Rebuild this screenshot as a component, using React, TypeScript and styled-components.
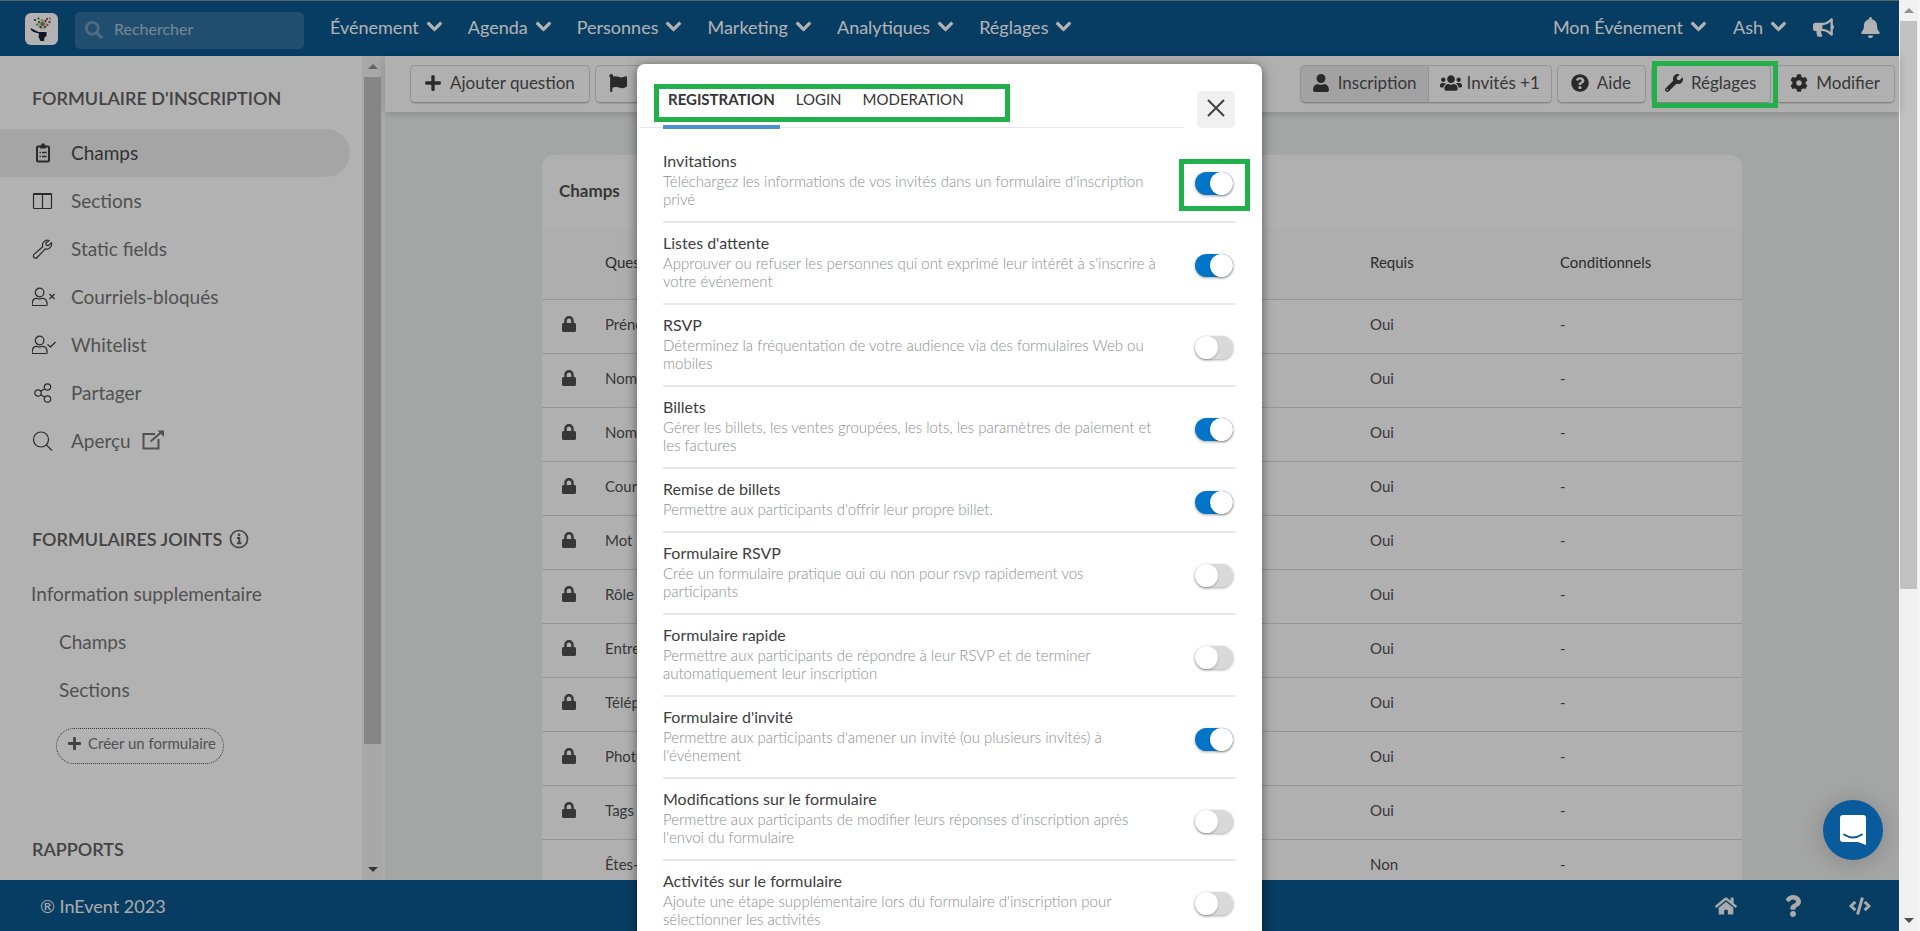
import React, { useState } from 'react';
import styled, { createGlobalStyle, css } from 'styled-components';
import {
  FaBell, FaBullhorn, FaChevronDown, FaCode, FaCog, FaFlag, FaHome, FaLock, FaPlus,
  FaQuestion, FaQuestionCircle, FaSearch, FaUser, FaUsers, FaWrench,
} from 'react-icons/fa';

const GlobalStyle = createGlobalStyle`
  * { box-sizing: border-box; }
  body { margin: 0; overflow: hidden; font-family: Lato, "Liberation Sans", sans-serif; color: #404040; }
  button, input { font: inherit; color: inherit; }
  button { cursor: pointer; }
  a { color: inherit; text-decoration: none; }
  h2, ul { margin: 0; padding: 0; }
  ul { list-style: none; }
`;

const Window = styled.div`
  display: grid;
  grid-template-columns: minmax(0, 1fr) 21px;
  height: 100vh;
  overflow: hidden;
`;

const Page = styled.div`
  position: relative;
  display: flex;
  flex-direction: column;
  min-height: 0;
`;

/* ---------- scrollbars ---------- */

const ScrollTrack = styled.div`
  display: flex;
  flex: 0 0 23px;
  flex-direction: column;
  align-items: center;
  border-right: 2px solid #f6f6f6;
  background: #f1f1f1;
`;

const ScrollThumb = styled.div<{ $share: number }>`
  flex: 0 0 ${p => p.$share}%;
  width: 17px;
  background: #c1c1c1;
`;

const Arrow = styled.span<{ $down?: boolean }>`
  display: flex;
  flex: none;
  align-items: center;
  justify-content: center;
  height: 21px;
  margin-top: ${p => (p.$down ? 'auto' : '0')};
  &::before {
    content: '';
    border: 5px solid transparent;
    ${p => (p.$down
    ? css`border-top-color: #505050; border-bottom: 0;`
    : css`border-bottom-color: #909090; border-top: 0;`)}
  }
`;

/* ---------- top bar ---------- */

const TopBar = styled.header`
  display: flex;
  align-items: center;
  flex: none;
  height: 56px;
  padding: 0 18px 0 25px;
  border-top: 1px solid #7c8b96;
  background: #0b578f;
  color: #fff;
`;

const Logo = styled.a`
  display: flex;
  width: 33px;
  height: 32px;
  border-radius: 6px;
  background: #fff;
`;

const Search = styled.label`
  display: flex;
  align-items: center;
  gap: 11px;
  width: 229px;
  height: 37px;
  margin: 3px 26px 0 17px;
  padding: 0 10px 4px;
  border-radius: 5px;
  background: #306f9f;
  color: #6d9abd;
  svg { flex: none; margin-top: 4px; font-size: 18px; }
`;

const SearchInput = styled.input`
  min-width: 0;
  flex: 1;
  padding: 0;
  border: 0;
  outline: 0;
  background: transparent;
  font-size: 16px;
  &::placeholder { color: #a9c3d8; opacity: 1; }
`;

const TopNav = styled.nav`
  display: flex;
  flex: 1;
  gap: 25px;
`;

const MenuButton = styled.button`
  display: flex;
  align-items: center;
  gap: 7px;
  padding: 0 0 4px;
  border: 0;
  background: none;
  font-size: 18px;
  line-height: 24px;
  white-space: nowrap;
  svg { font-size: 17px; stroke: currentColor; stroke-width: 24px; }
`;

const TopRight = styled.div`
  display: flex;
  align-items: center;
  gap: 26px;
`;

const IconButton = styled.button`
  display: flex;
  padding: 0 0 2px;
  border: 0;
  background: none;
  font-size: 21px;
`;

/* ---------- sidebar ---------- */

const Body = styled.div`
  display: flex;
  flex: 1;
  min-height: 0;
`;

const Sidebar = styled.aside`
  flex: 0 0 362px;
  overflow: hidden;
  padding: 31px 12px 0 0;
  background: #fff;
`;

const SideHeading = styled.h2`
  display: flex;
  align-items: center;
  gap: 7px;
  padding-left: 32px;
  font-size: 18px;
  font-weight: 600;
  line-height: 22px;
  color: #606060;
`;

const SideList = styled.ul<{ $space: number }>`
  margin: 20px 0 ${p => p.$space}px;
`;

const SideLink = styled.a<{ $active?: boolean; $sub?: boolean }>`
  display: flex;
  align-items: center;
  height: 48px;
  padding: 0 0 2px ${p => (p.$sub ? 59 : 31)}px;
  border-radius: 0 24px 24px 0;
  background: ${p => (p.$active ? '#ededed' : 'transparent')};
  color: ${p => (p.$active ? '#4a4a4a' : '#757575')};
  font-size: 19px;
`;

const SideIcon = styled.span`
  display: flex;
  width: 40px;
  padding: 1px 0 0 1px;
  color: #3d3d3d;
`;

const OpenIcon = styled.span`
  display: flex;
  margin-left: 11px;
`;

const CreateButton = styled.button`
  display: flex;
  align-items: center;
  gap: 6px;
  height: 36px;
  margin: 14px 0 74px 56px;
  padding: 0 7px 6px 10px;
  border: 1px dotted #555;
  border-radius: 18px;
  background: transparent;
  color: #757575;
  font-size: 15px;
  svg { color: #5f5f5f; }
`;

/* ---------- main area ---------- */

const Main = styled.main`
  display: flex;
  flex: 1;
  flex-direction: column;
  min-width: 0;
  background: #ebeeed;
`;

const Toolbar = styled.div`
  position: relative;
  display: flex;
  align-items: center;
  flex: none;
  gap: 5px;
  height: 56px;
  padding: 0 4px 0 25px;
  background: #fdfdfd;
  box-shadow: 0 1px 8px rgba(0, 0, 0, 0.2);
`;

const Spacer = styled.div`
  flex: 1;
`;

const ToolButton = styled.button<{ $pressed?: boolean; $join?: 'left' | 'right' }>`
  display: flex;
  align-items: center;
  gap: ${p => (p.$join === 'right' ? 5 : 8)}px;
  height: 38px;
  padding: ${p => (p.$join ? '0 11px 3px' : '0 14px 3px 13px')};
  border: 1px solid #d6d6d6;
  border-bottom-color: #bdbdbd;
  border-radius: ${p => (p.$join === 'left' ? '5px 0 0 5px' : p.$join === 'right' ? '0 5px 5px 0' : '5px')};
  ${p => p.$join === 'right' && 'border-left: 0;'}
  background: ${p => (p.$pressed ? '#e9e9e9' : '#fdfdfd')};
  box-shadow: 0 1px 1px rgba(0, 0, 0, 0.12);
  font-size: 17px;
  white-space: nowrap;
  color: #505050;
  svg { font-size: ${p => (p.$join === 'right' ? 22 : 18)}px; color: #3c3c3c; }
`;

const ButtonGroup = styled.div`
  display: flex;
`;

const Content = styled.div`
  flex: 1;
  min-height: 0;
  overflow: hidden;
  padding-top: 43px;
`;

const Card = styled.section`
  max-width: 1200px;
  min-height: 100%;
  margin: 0 auto;
  border-radius: 12px 12px 0 0;
  overflow: hidden;
  background: #fdfdfd;
`;

const CardTitle = styled.h2`
  padding: 0 17px 2px;
  font-size: 17px;
  line-height: 71px;
  color: #505050;
`;

const Table = styled.table`
  width: 100%;
  border-collapse: collapse;
  table-layout: fixed;
  font-size: 15px;
  color: #505050;
  th { height: 71px; padding: 0 0 2px; background: #f9f9f9; font-weight: 400; text-align: left; color: #404040; }
  td { height: 54px; padding: 0 0 4px; }
  tr { border-bottom: 1px solid #d6d6d6; }
`;

const HeadCell = styled.th<{ $width?: number }>`
  width: ${p => (p.$width ? `${p.$width}px` : 'auto')};
`;

const LockCell = styled.td`
  svg { display: block; margin-left: 19px; font-size: 16px; color: #505050; }
`;

const FootBar = styled.footer`
  display: flex;
  align-items: center;
  flex: none;
  gap: 45px;
  height: 51px;
  padding: 0 28px 0 40px;
  background: #0b578f;
  color: #f4f4f4;
  font-size: 18px;
`;

const FootLink = styled.a`
  display: flex;
  font-size: 22px;
`;

/* ---------- overlay and dialog ---------- */

const Backdrop = styled.div`
  position: absolute;
  inset: 0;
  display: flex;
  justify-content: center;
  overflow: hidden;
  padding-top: 64px;
  background: rgba(0, 0, 0, 0.3);
`;

const Dialog = styled.section`
  flex: 0 1 625px;
  height: max-content;
  min-height: 100%;
  border-radius: 8px;
  background: #fff;
  box-shadow: 0 2px 12px rgba(0, 0, 0, 0.5);
`;

const DialogHead = styled.div`
  display: flex;
  align-items: flex-start;
  padding: 20px 27px 0 2px;
`;

const TabLine = styled.div`
  position: relative;
  flex: 1;
  margin-right: 13px;
  padding-left: 24px;
  border-bottom: 1px solid #e6e6e6;
`;

const Tabs = styled.div`
  display: flex;
  gap: 11px;
  height: 43px;
`;

const Tab = styled.button<{ $active?: boolean }>`
  flex: none;
  height: 45px;
  padding: 2px 5px 13px;
  border: 0;
  border-bottom: 4px solid ${p => (p.$active ? '#4a90d9' : 'transparent')};
  background: none;
  font-size: 15px;
  line-height: 20px;
  font-weight: ${p => (p.$active ? 700 : 400)};
  color: #353535;
`;

const CloseButton = styled.button`
  display: flex;
  align-items: center;
  justify-content: center;
  width: 38px;
  height: 37px;
  margin-top: 7px;
  padding: 0 0 3px;
  border: 0;
  border-radius: 5px;
  background: #f0f0f0;
  color: #404040;
`;

const Options = styled.ul`
  padding: 13px 26px 0;
`;

const Option = styled.li`
  display: flex;
  justify-content: space-between;
  padding: 9px 0 13px;
  border-bottom: 2px solid #e8e8e8;
`;

const OptionText = styled.label`
  flex: 0 1 497px;
`;

const OptionTitle = styled.span`
  display: block;
  font-size: 16px;
  line-height: 22px;
  color: #404040;
`;

const OptionNote = styled.span`
  display: block;
  font-size: 15px;
  font-weight: 300;
  line-height: 18px;
  color: #8a8f8f;
`;

const SwitchCell = styled.div`
  position: relative;
  display: flex;
  align-items: center;
  padding: 8px 3px 0 0;
`;

const Switch = styled.input`
  appearance: none;
  display: flex;
  width: 38px;
  height: 23px;
  margin: 0;
  border-radius: 12px;
  background: #d9d9d9;
  box-shadow: 0 1px 3px rgba(0, 0, 0, 0.35);
  cursor: pointer;
  &::before {
    content: '';
    width: 23px;
    height: 23px;
    border-radius: 50%;
    background: #fff;
    box-shadow: 0 1px 2px rgba(0, 0, 0, 0.25);
  }
  &:checked { justify-content: flex-end; background: #0275c9; }
`;

const highlight = css`
  position: absolute;
  border: 5px solid #22b04b;
  pointer-events: none;
`;

const TabsMark = styled.div`
  ${highlight}
  top: 0;
  left: 15px;
  width: 356px;
  height: 38px;
`;

const SwitchMark = styled.div`
  ${highlight}
  inset: 9px -14px -3px -16px;
`;

const ToolMark = styled.div`
  ${highlight}
  z-index: 2;
  top: 61px;
  right: 121px;
  width: 126px;
  height: 47px;
`;

const ChatButton = styled.button`
  position: absolute;
  right: 16px;
  bottom: 71px;
  display: flex;
  align-items: center;
  justify-content: center;
  width: 60px;
  height: 60px;
  padding: 0;
  border: 0;
  border-radius: 50%;
  background: #0a5b9b;
  box-shadow: 0 2px 24px rgba(0, 0, 0, 0.2);
`;

/* ---------- line icons ---------- */

const Line = ({ size = 20, width = 24, w = 1.2, children }: { size?: number; width?: number; w?: number; children: React.ReactNode }) => (
  <svg
    width={(size * width) / 20} height={size} viewBox={`0 0 ${width} 20`}
    fill="none" stroke="currentColor" strokeWidth={w} strokeLinejoin="round" aria-hidden="true"
  >
    {children}
  </svg>
);

const ClipboardIcon = () => (
  <Line w={2}>
    <rect x="5" y="3.5" width="12" height="15" rx="1" />
    <path d="M8 2.5h6v3H8z" fill="currentColor" stroke="none" />
    <circle cx="11" cy="2.2" r="1.9" fill="currentColor" stroke="none" />
    <path d="M7.5 9.5h1.4M10 9.5h4.6M7.5 13.5h1.4M10 13.5h4.6" strokeWidth="1.3" />
  </Line>
);
const ColumnsIcon = () => (
  <Line>
    <rect x="1.5" y="2.5" width="18" height="15" rx="1" />
    <path d="M1.5 3h18" strokeWidth="2" />
    <path d="M10.5 3v14.5" />
  </Line>
);
const WrenchIcon = () => (
  <Line>
    <path d="M17.2 1.5a5 5 0 0 0-6.5 6.2L2 15.4a2.2 2.2 0 0 0 3.2 3.1l8-8.6a5 5 0 0 0 6.2-6.2l-3 3-2.1-.6-.5-2z" />
  </Line>
);
const Person = () => (
  <>
    <circle cx="7.6" cy="5.5" r="4.3" />
    <path d="M4.6 11.3C1.6 11.3.1 14 .1 17.5q0 1 1 1h13q1 0 1-1c0-3.5-1.5-6.2-4.5-6.2-2 1-4 1-6 0z" />
  </>
);
const PersonRemoveIcon = () => (
  <Line><Person /><path d="M17.5 7l5 5m0-5l-5 5" /></Line>
);
const PersonCheckIcon = () => (
  <Line><Person /><path d="M15.5 9.5l3 2.500 5-5" /></Line>
);
const ShareIcon = () => (
  <Line>
    <circle cx="6" cy="10" r="3.2" />
    <circle cx="15.5" cy="4" r="3.2" />
    <circle cx="15.5" cy="16" r="3.2" />
    <path d="M8.7 8.3l4.1-2.6M8.7 11.7l4.1 2.6" />
  </Line>
);
const LensIcon = () => (
  <Line><circle cx="9" cy="8.5" r="7.5" /><path d="M14.3 13.8l5.7 5.7" /></Line>
);
const OpenExternalIcon = () => (
  <Line size={20} w={2}>
    <path d="M13 4H1.5v14.500h15V9" strokeLinejoin="miter" />
    <path d="M8.5 11.5L19 2.5" />
    <path d="M15.5 0.5H22V7z" fill="currentColor" stroke="none" />
  </Line>
);
const InfoIcon = () => (
  <Line size={20} width={20} w={1.7}>
    <circle cx="10" cy="10" r="8.5" />
    <circle cx="10" cy="5.8" r="1.4" fill="currentColor" stroke="none" />
    <path d="M8 9h2.3v5M8 14.2h4.5" strokeWidth="2" />
  </Line>
);
const LogoIcon = () => (
  <svg width="33" height="32" viewBox="0 0 33 32" aria-hidden="true">
    <path d="M5.5 15l3 1.500 5 2.500h8v4l-2 1.500-.5 3.500h-3.500l-2-4 .5-3.500-5.500-1.500-2.500-2z" fill="#123" />
    <circle cx="17.5" cy="11.5" r="5" fill="#d9d3b4" />
    <circle cx="17.5" cy="11" r="2" fill="#568e61" />
    <g fill="#333">
      <circle cx="10" cy="7" r="1.1" /><circle cx="13.5" cy="5.5" r=".9" /><circle cx="14" cy="9" r=".9" />
      <circle cx="20.5" cy="8" r=".9" /><circle cx="15.5" cy="14" r=".9" /><circle cx="20" cy="14" r=".9" />
    </g>
    <g fill="#c0455c">
      <circle cx="22" cy="6" r="1.2" /><circle cx="24.5" cy="9" r="1.2" /><circle cx="22.5" cy="12" r="1" />
    </g>
    <circle cx="17" cy="7" r="1" fill="#d8a33a" /><circle cx="12" cy="11.5" r="1" fill="#568e61" />
    <circle cx="25" cy="5.5" r=".9" fill="#568e61" />
  </svg>
);
const ChatIcon = () => (
  <svg width="28" height="32" viewBox="0 0 28 32" aria-hidden="true">
    <path d="M4 1h20a3 3 0 0 1 3 3v27l-8-3H4a3 3 0 0 1-3-3V4a3 3 0 0 1 3-3z" fill="#fff" />
    <path d="M5 20.5q9 6 18 0" fill="none" stroke="#0a5b9b" strokeWidth="1.8" strokeLinecap="round" />
  </svg>
);
const CloseIcon = () => (
  <svg width="18" height="18" viewBox="0 0 18 18" fill="none" stroke="currentColor" strokeWidth="2" aria-hidden="true">
    <path d="M1 1l16 16M17 1L1 17" />
  </svg>
);

/* ---------- data ---------- */

const menus = ['Événement', 'Agenda', 'Personnes', 'Marketing', 'Analytiques', 'Réglages'];

const sideItems = [
  { label: 'Champs', icon: <ClipboardIcon />, active: true },
  { label: 'Sections', icon: <ColumnsIcon /> },
  { label: 'Static fields', icon: <WrenchIcon /> },
  { label: 'Courriels-bloqués', icon: <PersonRemoveIcon /> },
  { label: 'Whitelist', icon: <PersonCheckIcon /> },
  { label: 'Partager', icon: <ShareIcon /> },
  { label: 'Aperçu', icon: <LensIcon />, external: true },
];

const fields = [
  { name: 'Prénom', locked: true, required: 'Oui' },
  { name: 'Nom', locked: true, required: 'Oui' },
  { name: 'Nom', locked: true, required: 'Oui' },
  { name: 'Courriel', locked: true, required: 'Oui' },
  { name: 'Mot', locked: true, required: 'Oui' },
  { name: 'Rôle', locked: true, required: 'Oui' },
  { name: 'Entrepr.', locked: true, required: 'Oui' },
  { name: 'Télép.', locked: true, required: 'Oui' },
  { name: 'Photo', locked: true, required: 'Oui' },
  { name: 'Tags', locked: true, required: 'Oui' },
  { name: 'Êtes-v.', locked: false, required: 'Non' },
];

const initialOptions = [
  { title: 'Invitations', note: "Téléchargez les informations de vos invités dans un formulaire d'inscription privé", on: true, marked: true },
  { title: "Listes d'attente", note: "Approuver ou refuser les personnes qui ont exprimé leur intérêt à s'inscrire à votre événement", on: true },
  { title: 'RSVP', note: 'Déterminez la fréquentation de votre audience via des formulaires Web ou mobiles', on: false },
  { title: 'Billets', note: 'Gérer les billets, les ventes groupées, les lots, les paramètres de paiement et les factures', on: true },
  { title: 'Remise de billets', note: "Permettre aux participants d'offrir leur propre billet.", on: true },
  { title: 'Formulaire RSVP', note: 'Crée un formulaire pratique oui ou non pour rsvp rapidement vos participants', on: false },
  { title: 'Formulaire rapide', note: 'Permettre aux participants de répondre à leur RSVP et de terminer automatiquement leur inscription', on: false },
  { title: "Formulaire d'invité", note: "Permettre aux participants d'amener un invité (ou plusieurs invités) à l'événement", on: true },
  { title: 'Modifications sur le formulaire', note: "Permettre aux participants de modifier leurs réponses d'inscription après l'envoi du formulaire", on: false },
  { title: 'Activités sur le formulaire', note: "Ajoute une étape supplémentaire lors du formulaire d'inscription pour sélectionner les activités", on: false },
];

const tabs = ['REGISTRATION', 'LOGIN', 'MODERATION'];

export default function App() {
  const [tab, setTab] = useState(tabs[0]);
  const [options, setOptions] = useState(initialOptions);
  const toggle = (index: number) =>
    setOptions(list => list.map((o, i) => (i === index ? { ...o, on: !o.on } : o)));

  return (
    <>
      <GlobalStyle />
      <Window>
        <Page>
          <TopBar>
            <Logo href="#" aria-label="Accueil"><LogoIcon /></Logo>
            <Search>
              <FaSearch />
              <SearchInput type="search" placeholder="Rechercher" aria-label="Rechercher" />
            </Search>
            <TopNav>
              {menus.map(m => <MenuButton key={m}>{m}<FaChevronDown /></MenuButton>)}
            </TopNav>
            <TopRight>
              <MenuButton>Mon Événement<FaChevronDown /></MenuButton>
              <MenuButton>Ash<FaChevronDown /></MenuButton>
              <IconButton aria-label="Annonces"><FaBullhorn /></IconButton>
              <IconButton aria-label="Notifications"><FaBell /></IconButton>
            </TopRight>
          </TopBar>

          <Body>
            <Sidebar>
              <SideHeading>FORMULAIRE D'INSCRIPTION</SideHeading>
              <SideList $space={63}>
                {sideItems.map(item => (
                  <li key={item.label}>
                    <SideLink href="#" $active={item.active}>
                      <SideIcon>{item.icon}</SideIcon>
                      {item.label}
                      {item.external && <OpenIcon><OpenExternalIcon /></OpenIcon>}
                    </SideLink>
                  </li>
                ))}
              </SideList>
              <SideHeading>FORMULAIRES JOINTS<InfoIcon /></SideHeading>
              <SideList $space={0}>
                <li><SideLink href="#">Information supplementaire</SideLink></li>
                <li><SideLink href="#" $sub>Champs</SideLink></li>
                <li><SideLink href="#" $sub>Sections</SideLink></li>
              </SideList>
              <CreateButton><FaPlus />Créer un formulaire</CreateButton>
              <SideHeading>RAPPORTS</SideHeading>
            </Sidebar>
            <ScrollTrack><Arrow /><ScrollThumb $share={81} /><Arrow $down /></ScrollTrack>

            <Main>
              <Toolbar>
                <ToolButton><FaPlus />Ajouter question</ToolButton>
                <ToolButton aria-label="Langue"><FaFlag /></ToolButton>
                <Spacer />
                <ButtonGroup>
                  <ToolButton $pressed $join="left"><FaUser />Inscription</ToolButton>
                  <ToolButton $join="right"><FaUsers />Invités +1</ToolButton>
                </ButtonGroup>
                <ToolButton><FaQuestionCircle />Aide</ToolButton>
                <ToolButton><FaWrench />Réglages</ToolButton>
                <ToolButton><FaCog />Modifier</ToolButton>
              </Toolbar>
              <Content>
                <Card>
                  <CardTitle>Champs</CardTitle>
                  <Table>
                    <thead>
                      <tr>
                        <HeadCell $width={63} aria-label="Verrou" />
                        <HeadCell>Question</HeadCell>
                        <HeadCell $width={190}>Requis</HeadCell>
                        <HeadCell $width={182}>Conditionnels</HeadCell>
                      </tr>
                    </thead>
                    <tbody>
                      {fields.map((f, i) => (
                        <tr key={i}>
                          <LockCell>{f.locked && <FaLock />}</LockCell>
                          <td>{f.name}</td>
                          <td>{f.required}</td>
                          <td>-</td>
                        </tr>
                      ))}
                    </tbody>
                  </Table>
                </Card>
              </Content>
            </Main>
          </Body>

          <FootBar>
            <span>® InEvent 2023</span>
            <Spacer />
            <FootLink href="#" aria-label="Accueil"><FaHome /></FootLink>
            <FootLink href="#" aria-label="Aide"><FaQuestion /></FootLink>
            <FootLink href="#" aria-label="Code"><FaCode /></FootLink>
          </FootBar>

          <Backdrop>
            <Dialog role="dialog" aria-label="Réglages">
              <DialogHead>
                <TabLine>
                  <Tabs role="tablist">
                    {tabs.map(t => (
                      <Tab key={t} role="tab" aria-selected={t === tab} $active={t === tab} onClick={() => setTab(t)}>{t}</Tab>
                    ))}
                  </Tabs>
                  <TabsMark />
                </TabLine>
                <CloseButton aria-label="Fermer"><CloseIcon /></CloseButton>
              </DialogHead>
              <Options>
                {options.map((o, i) => (
                  <Option key={o.title}>
                    <OptionText htmlFor={`option-${i}`}>
                      <OptionTitle>{o.title}</OptionTitle>
                      <OptionNote>{o.note}</OptionNote>
                    </OptionText>
                    <SwitchCell>
                      <Switch id={`option-${i}`} type="checkbox" role="switch" checked={o.on} onChange={() => toggle(i)} />
                      {o.marked && <SwitchMark />}
                    </SwitchCell>
                  </Option>
                ))}
              </Options>
            </Dialog>
          </Backdrop>
          <ToolMark />
          <ChatButton aria-label="Ouvrir le chat"><ChatIcon /></ChatButton>
        </Page>
        <ScrollTrack><Arrow /><ScrollThumb $share={61} /><Arrow $down /></ScrollTrack>
      </Window>
    </>
  );
}
